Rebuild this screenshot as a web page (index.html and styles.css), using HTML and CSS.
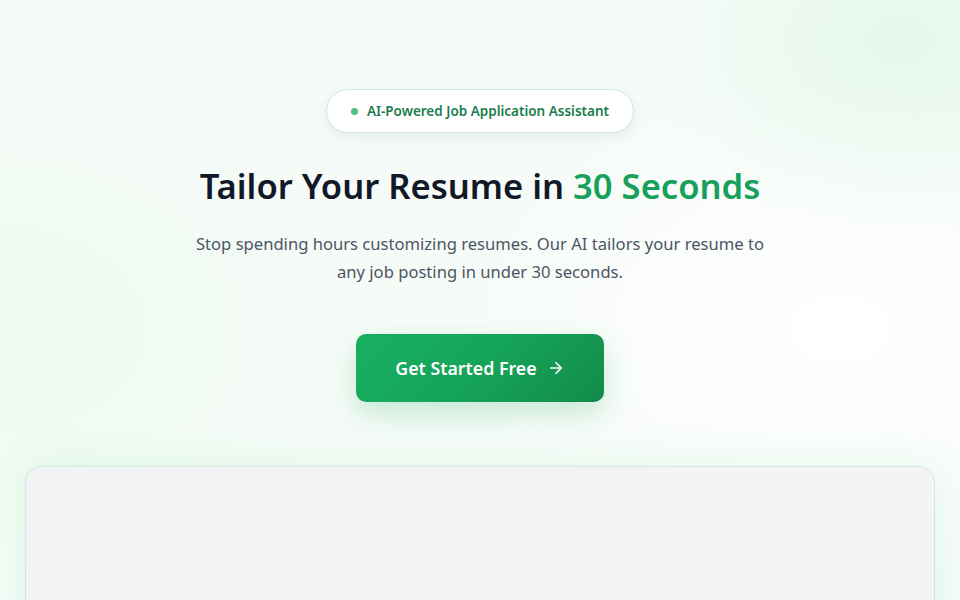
FILE: index.html
```html
<!DOCTYPE html>
<html lang="en">
<head>
<meta charset="utf-8">
<title>Tailor Your Resume</title>
<link rel="stylesheet" href="styles.css">
</head>
<body>
<main class="hero">
  <div class="badge"><span class="dot"></span><span>AI-Powered Job Application Assistant</span></div>
  <h1 class="title">Tailor Your Resume in <span class="accent">30 Seconds</span></h1>
  <p class="lead">Stop spending hours customizing resumes. Our AI tailors your resume to any job posting in under 30 seconds.</p>
  <a class="cta" href="#">Get Started Free
    <svg class="arrow" width="18" height="18" viewBox="0 0 24 24" fill="none" stroke="currentColor" stroke-width="2.2" stroke-linecap="round" stroke-linejoin="round"><path d="M5 12h14"/><path d="M12 5l7 7-7 7"/></svg>
  </a>
  <section class="preview"></section>
</main>
</body>
</html>
```

FILE: styles.css
```css
html, body {
  margin: 0;
  height: 100%;
  overflow: hidden;
}
body {
  font-family: "Noto Sans", "Open Sans", sans-serif;
  background:
    radial-gradient(ellipse 260px 200px at 900px 40px, rgba(214, 244, 224, 0.55), rgba(214, 244, 224, 0) 100%),
    radial-gradient(ellipse 360px 260px at 0px 330px, rgba(228, 249, 232, 0.5), rgba(228, 249, 232, 0) 100%),
    radial-gradient(ellipse 380px 260px at 840px 330px, rgba(255, 255, 255, 1), rgba(255, 255, 255, 0) 100%),
    #f6fbf8;
}
.hero {
  display: flex;
  flex-direction: column;
  align-items: center;
  text-align: center;
  padding-top: 89px;
}
.badge {
  display: inline-flex;
  align-items: center;
  gap: 9px;
  height: 44px;
  box-sizing: border-box;
  padding: 0 24px;
  background: #ffffff;
  border: 1px solid #cfe7dc;
  border-radius: 999px;
  box-shadow: 0 4px 12px rgba(16, 80, 50, 0.08);
  font-size: 13.5px;
  font-weight: 600;
  color: #1b7d4d;
}
.dot {
  width: 7px;
  height: 7px;
  border-radius: 50%;
  background: #4fc088;
}
.title {
  margin: 31px 0 0;
  font-size: 34.6px;
  line-height: 44px;
  font-weight: 600;
  color: #111827;
}
.accent {
  color: #16a05a;
}
.lead {
  margin: 22px 0 0;
  max-width: 590px;
  font-size: 16.6px;
  line-height: 28px;
  color: #4b5563;
}
.cta {
  margin-top: 48px;
  display: inline-flex;
  align-items: center;
  justify-content: center;
  gap: 10px;
  width: 248px;
  height: 68px;
  box-sizing: border-box;
  border-radius: 10px;
  background: linear-gradient(135deg, #19b062 0%, #15a257 55%, #128a49 100%);
  color: #ffffff;
  font-size: 17.8px;
  font-weight: 600;
  text-decoration: none;
  box-shadow: 0 12px 28px rgba(34, 170, 90, 0.22);
}
.arrow {
  display: block;
}
.preview {
  align-self: stretch;
  margin: 64px 25px 0;
  height: 300px;
  background: #f3f4f6;
  border: 1px solid #d2eadb;
  border-radius: 16px;
  box-shadow: 0 0 40px rgba(80, 210, 120, 0.14);
}
```
